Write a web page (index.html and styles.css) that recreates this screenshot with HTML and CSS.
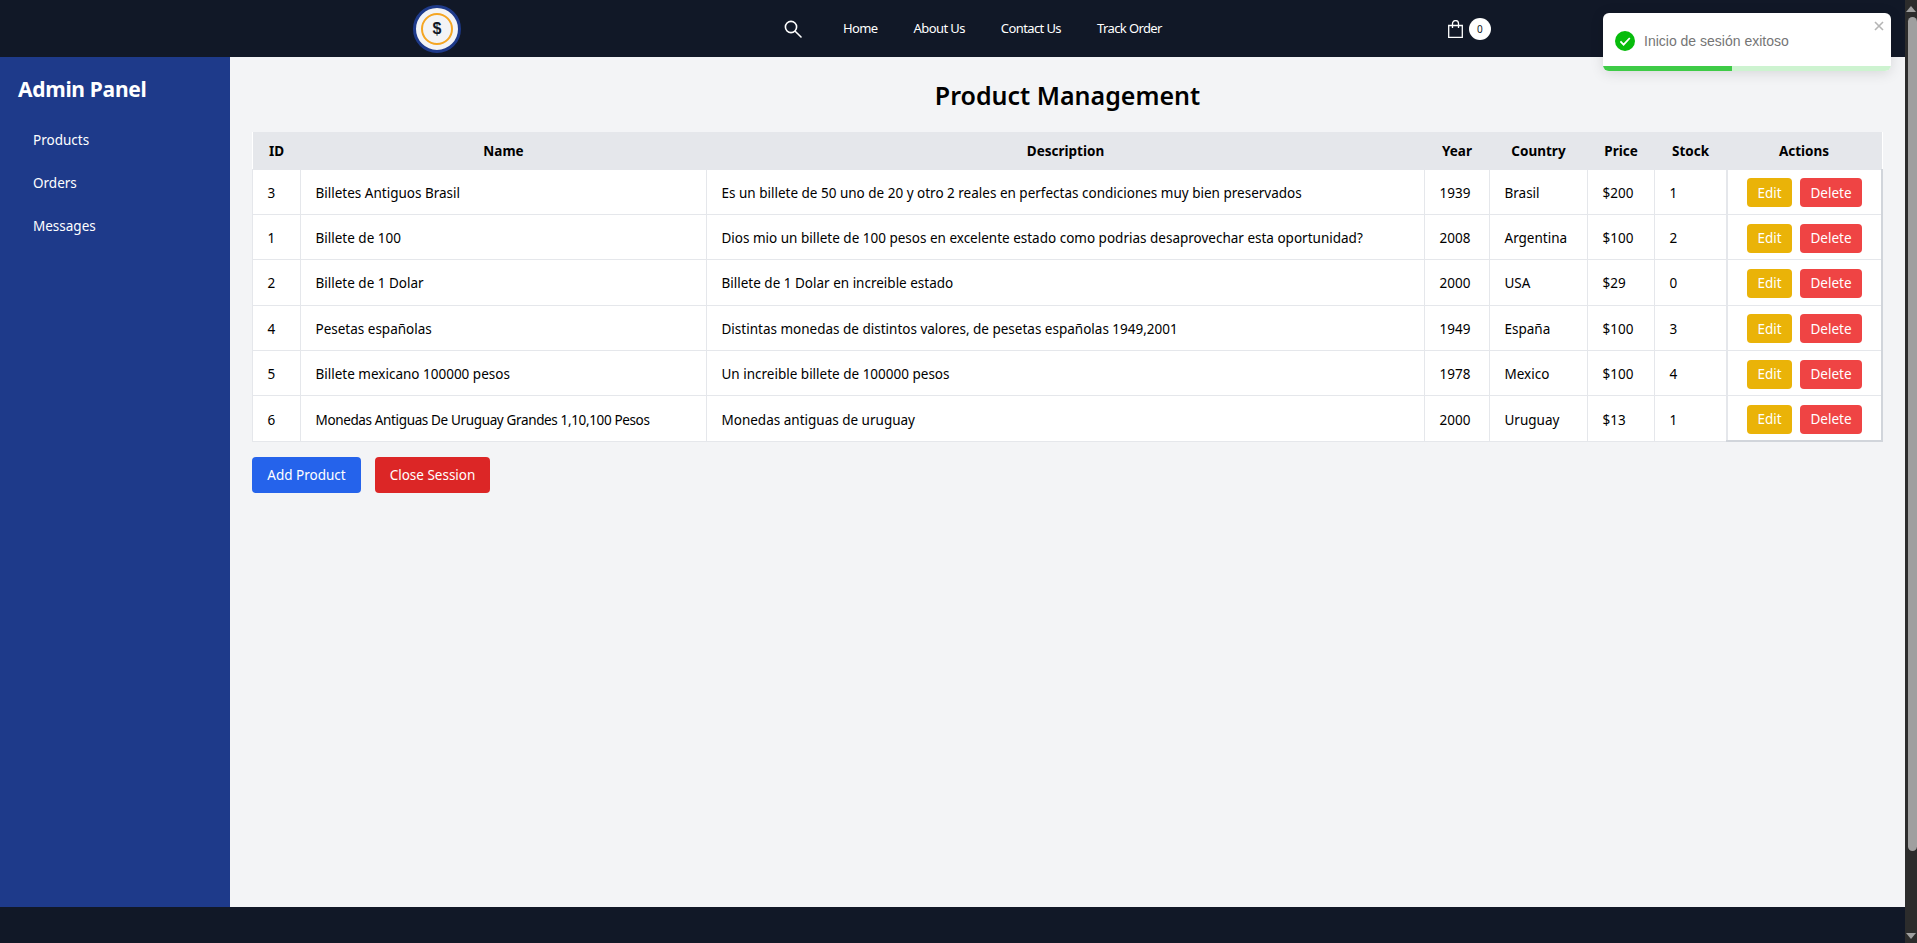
FILE: index.html
```html
<!DOCTYPE html>
<html lang="en">
<head>
<meta charset="utf-8">
<title>Admin Panel</title>
<link rel="stylesheet" href="styles.css">
</head>
<body>
<div class="page">
  <header class="topbar">
    <div class="logo">
      <div class="logo-ring">$</div>
    </div>
    <svg class="search" viewBox="0 0 20 20" width="20" height="20" fill="none" stroke="#fff" stroke-width="1.6" stroke-linecap="round"><circle cx="8" cy="8" r="5.6"/><path d="M12.2 12.2 L18 18"/></svg>
    <nav class="nav">
      <a>Home</a><a>About Us</a><a>Contact Us</a><a>Track Order</a>
    </nav>
    <div class="cart">
      <svg viewBox="0 0 15 18" width="15" height="18" fill="none" stroke="#fff" stroke-width="1.3"><path d="M.7 5.5h13.6v11.8H.7z"/><path d="M4.5 8V3.6a3 3 0 0 1 6 0V8"/></svg>
      <span class="badge">0</span>
    </div>
  </header>
  <div class="body-row">
    <aside class="sidebar">
      <h2>Admin Panel</h2>
      <ul>
        <li>Products</li>
        <li>Orders</li>
        <li>Messages</li>
      </ul>
    </aside>
    <main class="main">
      <h1>Product Management</h1>
      <table class="products">
        <colgroup>
          <col class="c-id"><col class="c-name"><col class="c-desc"><col class="c-year"><col class="c-country"><col class="c-price"><col class="c-stock"><col class="c-actions">
        </colgroup>
        <thead>
          <tr><th>ID</th><th>Name</th><th>Description</th><th>Year</th><th>Country</th><th>Price</th><th>Stock</th><th>Actions</th></tr>
        </thead>
        <tbody>
          <tr><td>3</td><td>Billetes Antiguos Brasil</td><td>Es un billete de 50 uno de 20 y otro 2 reales en perfectas condiciones muy bien preservados</td><td>1939</td><td>Brasil</td><td>$200</td><td>1</td><td class="act"><div class="act-box"><button class="btn edit">Edit</button><button class="btn del">Delete</button></div></td></tr>
          <tr><td>1</td><td>Billete de 100</td><td>Dios mio un billete de 100 pesos en excelente estado como podrias desaprovechar esta oportunidad?</td><td>2008</td><td>Argentina</td><td>$100</td><td>2</td><td class="act"><div class="act-box"><button class="btn edit">Edit</button><button class="btn del">Delete</button></div></td></tr>
          <tr><td>2</td><td>Billete de 1 Dolar</td><td>Billete de 1 Dolar en increible estado</td><td>2000</td><td>USA</td><td>$29</td><td>0</td><td class="act"><div class="act-box"><button class="btn edit">Edit</button><button class="btn del">Delete</button></div></td></tr>
          <tr><td>4</td><td>Pesetas españolas</td><td>Distintas monedas de distintos valores, de pesetas españolas 1949,2001</td><td>1949</td><td>España</td><td>$100</td><td>3</td><td class="act"><div class="act-box"><button class="btn edit">Edit</button><button class="btn del">Delete</button></div></td></tr>
          <tr><td>5</td><td>Billete mexicano 100000 pesos</td><td>Un increible billete de 100000 pesos</td><td>1978</td><td>Mexico</td><td>$100</td><td>4</td><td class="act"><div class="act-box"><button class="btn edit">Edit</button><button class="btn del">Delete</button></div></td></tr>
          <tr><td>6</td><td class="tight">Monedas Antiguas De Uruguay Grandes 1,10,100 Pesos</td><td>Monedas antiguas de uruguay</td><td>2000</td><td>Uruguay</td><td>$13</td><td>1</td><td class="act"><div class="act-box"><button class="btn edit">Edit</button><button class="btn del">Delete</button></div></td></tr>
        </tbody>
      </table>
      <div class="bottom-actions">
        <button class="btn-lg add">Add Product</button>
        <button class="btn-lg close">Close Session</button>
      </div>
    </main>
  </div>
  <footer class="footer"></footer>
</div>
<div class="scrollbar">
  <span class="arrow-up"></span>
  <span class="thumb"></span>
  <span class="arrow-down"></span>
</div>
<div class="toast">
  <div class="toast-body">
    <svg class="toast-icon" viewBox="0 0 20 20" width="20" height="20"><circle cx="10" cy="10" r="10" fill="#07bc0c"/><path d="M5.4 10.4 L8.6 13.6 L14.8 7" fill="none" stroke="#fff" stroke-width="1.8"/></svg>
    <span class="toast-text">Inicio de sesión exitoso</span>
  </div>
  <svg class="toast-close" viewBox="0 0 10 10" width="10" height="10" stroke="#b5b5b5" stroke-width="1.6"><path d="M1 1 L9 9 M9 1 L1 9"/></svg>
  <div class="toast-progress"><div class="toast-fill"></div></div>
</div>
</body>
</html>
```
FILE: styles.css
```css
* { box-sizing: border-box; }
html, body { margin: 0; height: 100%; overflow: hidden; }
body {
  display: flex;
  font-family: "Noto Sans", "Open Sans", sans-serif;
  color: #000;
  background: #f3f4f6;
}
.page { flex: 1; min-width: 0; height: 943px; display: flex; flex-direction: column; }

/* top bar */
.topbar {
  height: 57px;
  flex: none;
  background: #111827;
  display: flex;
  align-items: center;
  padding-left: 413px;
  color: #fff;
}
.logo {
  width: 48px; height: 48px; border-radius: 50%;
  background: #f3f4f6; border: 3px solid #1e3a8a;
  display: flex; align-items: center; justify-content: center;
}
.logo-ring {
  width: 32px; height: 32px; border-radius: 50%;
  border: 2px solid #f5a623;
  color: #111827; font: 700 16px/1 "Liberation Sans", sans-serif;
  display: flex; align-items: center; justify-content: center;
}
.search { margin-left: 322px; }
.nav { display: flex; gap: 36px; margin-left: 40px; padding-bottom: 2px; font-size: 13px; letter-spacing: -0.6px; }
.cart { display: flex; align-items: center; gap: 6px; margin-left: 286px; }
.badge {
  width: 22px; height: 22px; border-radius: 50%;
  background: #fff; color: #111827; font-size: 10px;
  display: flex; align-items: center; justify-content: center;
}

/* sidebar + main */
.body-row { flex: 1; display: flex; min-height: 0; }
.sidebar { width: 230px; flex: none; background: #1e3a8a; color: #fff; padding: 17px 18px; }
.sidebar h2 { margin: 0 0 27px; font-size: 21px; line-height: 30px; font-weight: 700; letter-spacing: -0.3px; }
.sidebar ul { list-style: none; margin: 0; padding: 0 0 0 15px; }
.sidebar li { font-size: 13.5px; line-height: 19px; margin-bottom: 24px; }
.main { flex: 1; min-width: 0; padding: 19px 22px; }
.main h1 { margin: 0 0 18px; text-align: center; font-size: 25px; line-height: 38px; font-weight: 600; }

/* table */
.products { width: 1629px; table-layout: fixed; border-collapse: collapse; font-size: 13.5px; background: #fff; }
.c-id { width: 48px; } .c-name { width: 406px; } .c-desc { width: 718px; } .c-year { width: 65px; }
.c-country { width: 98px; } .c-price { width: 67px; } .c-stock { width: 72px; } .c-actions { width: 155px; }
.products th { background: #e5e7eb; height: 37px; padding: 2px 0 0; font-weight: 700; text-align: center; }
.products td { border: 1px solid #e5e7eb; height: 45.4px; padding: 2px 14.5px 0; white-space: nowrap; }
.products td.tight { letter-spacing: -0.36px; }
.products td.act { padding: 2px 0 0; border-left: 2px solid #e5e7eb; border-right: 2px solid #d1d5db; }
.act-box { display: flex; justify-content: center; gap: 8px; padding-left: 1px; }
.products tr:last-child td { border-bottom: 1px solid #e5e7eb; }
.products tr:last-child td.act { border-bottom: 2px solid #d1d5db; }
.btn {
  height: 29px; border: 0; border-radius: 4px; color: #fff;
  font: inherit; font-size: 13.5px; padding: 0;
}
.edit { width: 45px; background: #eab308; }
.del { width: 62px; background: #ef4444; }
.bottom-actions { display: flex; gap: 14px; margin-top: 15px; }
.btn-lg {
  height: 36px; border: 0; border-radius: 4px; color: #fff;
  font: inherit; font-size: 13.5px; padding: 0;
}
.add { width: 109px; background: #2563eb; }
.close { width: 115px; background: #dc2626; }

.footer { height: 36px; flex: none; background: #111827; }

/* scrollbar */
.scrollbar { width: 12px; flex: none; height: 943px; background: #2c2c2c; display: flex; flex-direction: column; align-items: flex-end; position: relative; }
.arrow-up { margin: 6px 1px 0 0; border: 5px solid transparent; border-top: 0; border-bottom: 6px solid #9f9f9f; }
.thumb { margin-top: 5px; width: 9px; height: 834px; border-radius: 5px; background: #9f9f9f; }
.arrow-down { margin: 82px 1px 0 0; border: 5px solid transparent; border-bottom: 0; border-top: 6px solid #9f9f9f; }

/* toast */
.toast {
  position: absolute; left: 1603px; top: 13px; width: 288px; height: 58px;
  background: #fff; border-radius: 6px; overflow: hidden;
  box-shadow: 0 2px 14px rgba(0, 0, 0, .12);
  font-family: "Liberation Sans", Arial, sans-serif;
}
.toast-body { display: flex; align-items: center; gap: 9px; height: 53px; padding-left: 12px; padding-top: 3px; }
.toast-text { font-size: 14px; color: #757575; }
.toast-close { position: absolute; right: 7px; top: 8px; }
.toast-progress { height: 5px; background: #cdf3d0; }
.toast-fill { width: 129px; height: 5px; background: #3ecb47; }
```
